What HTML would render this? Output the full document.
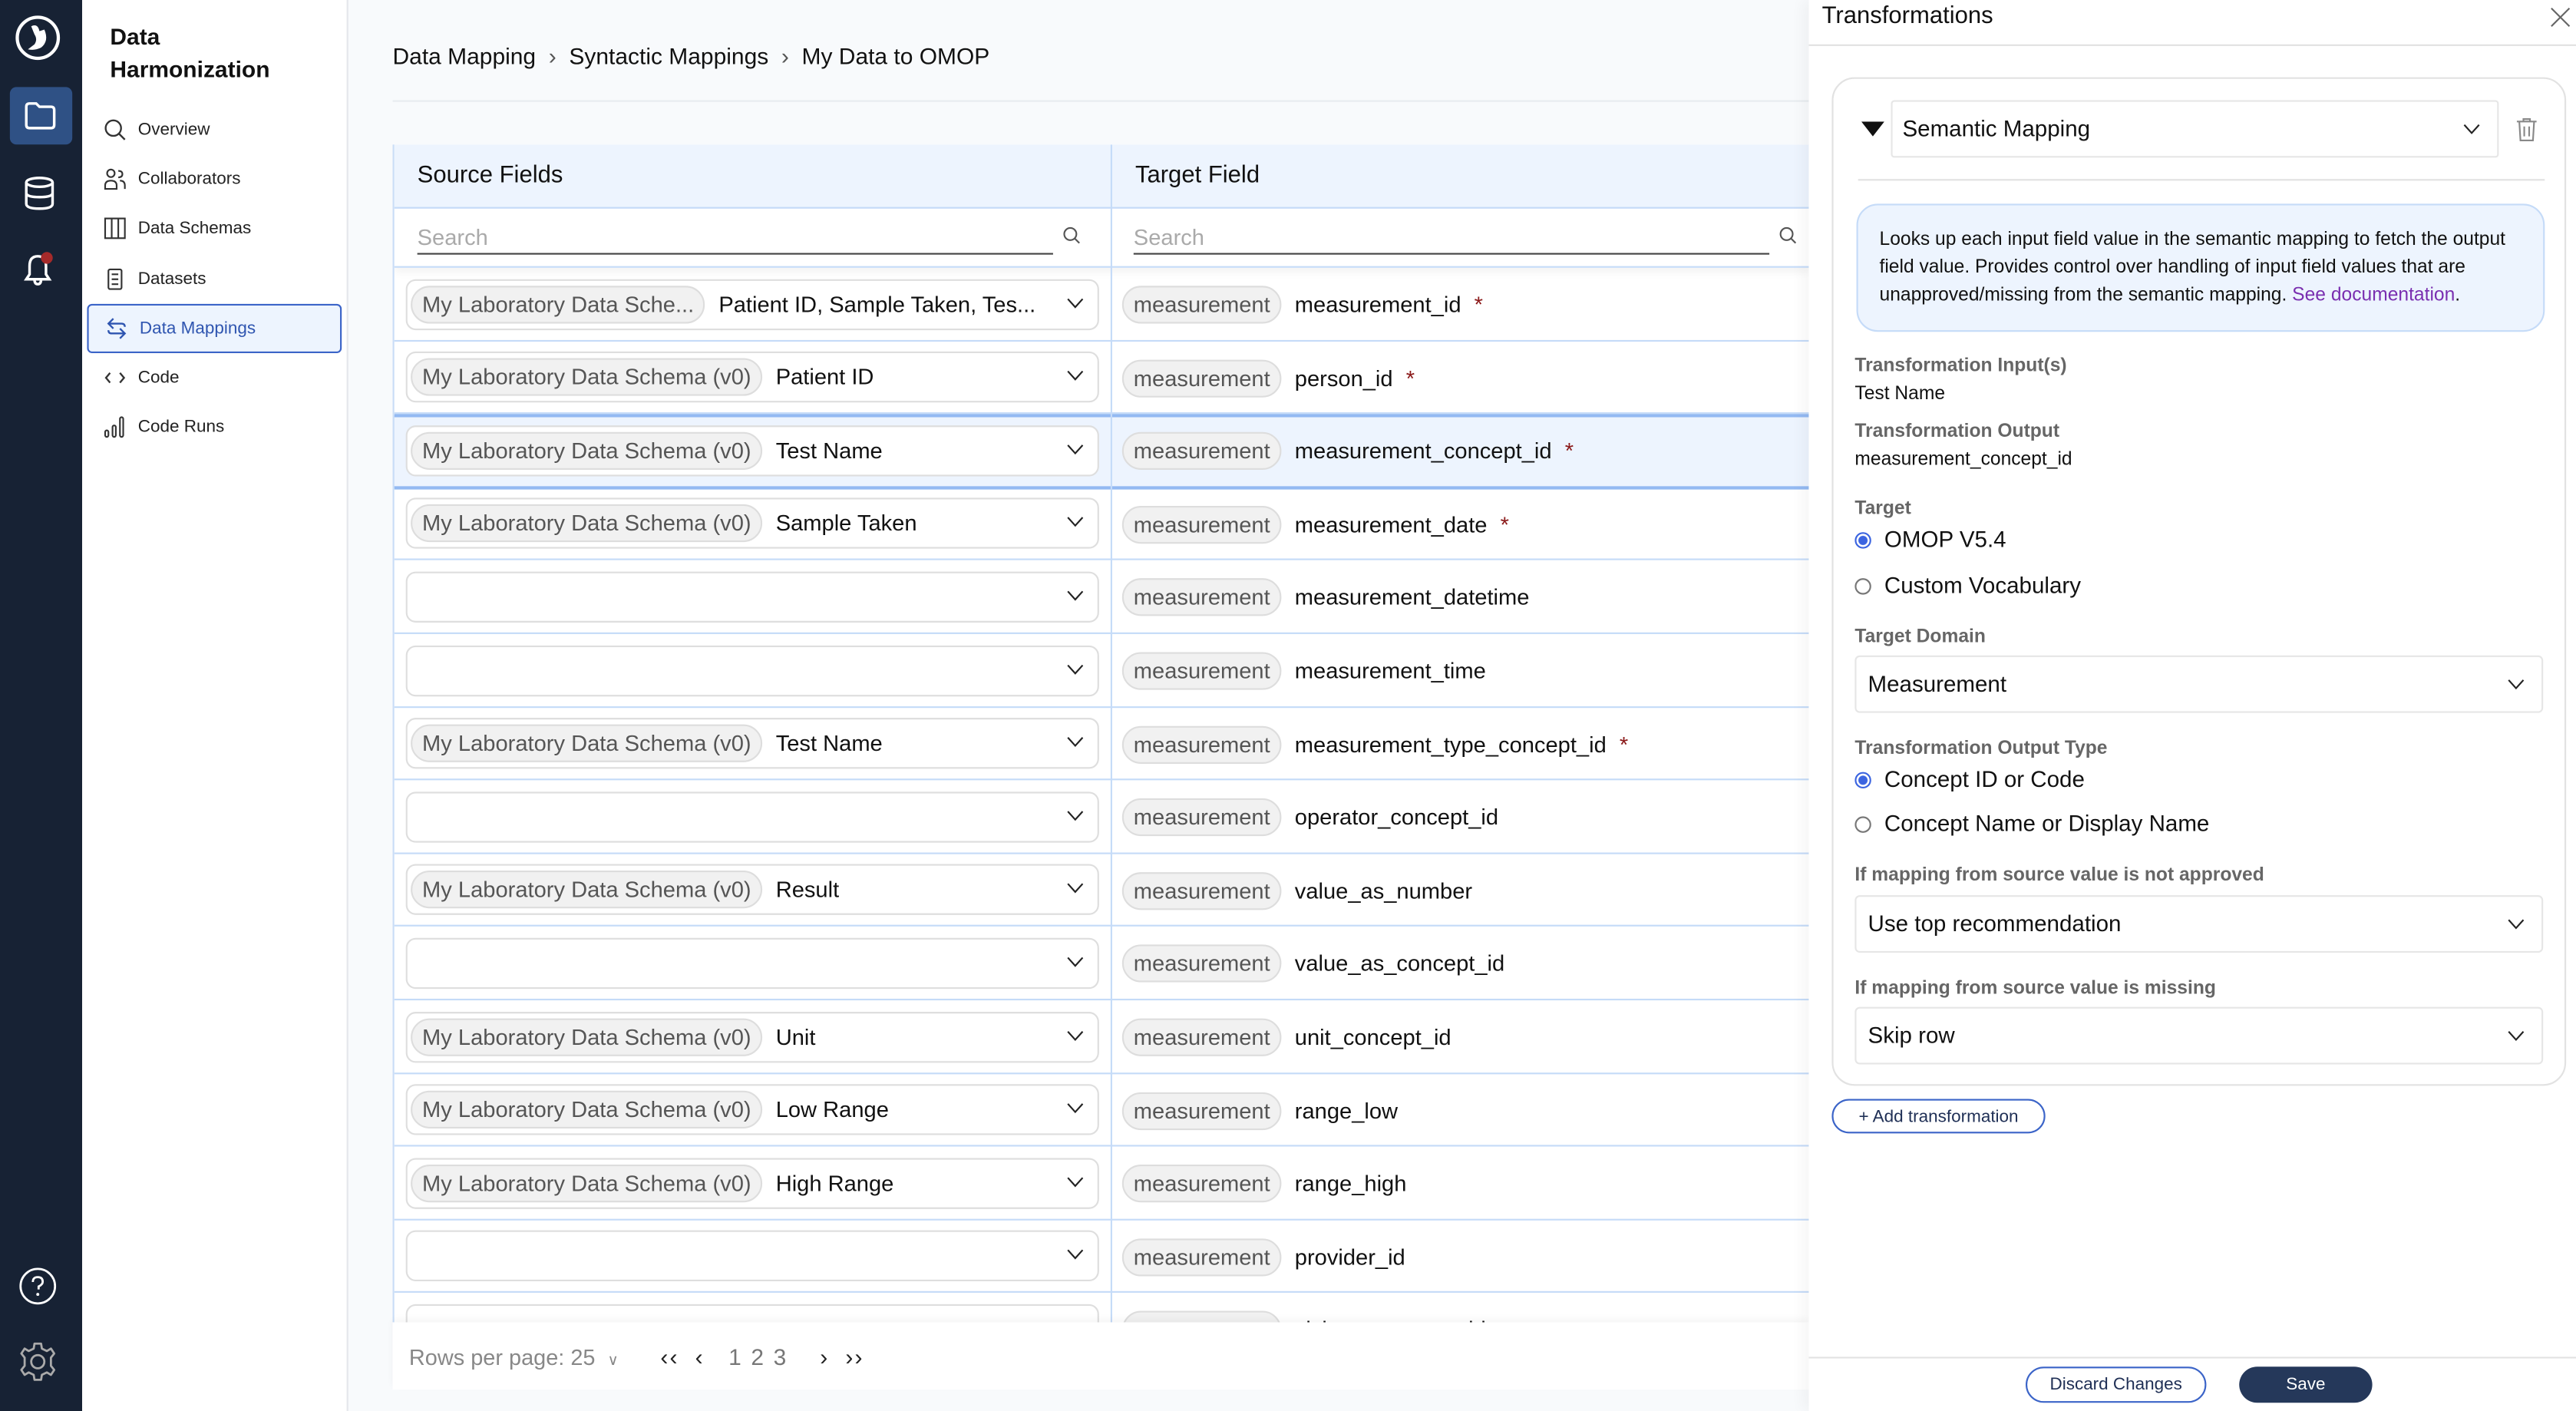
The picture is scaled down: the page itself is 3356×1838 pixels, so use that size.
<!DOCTYPE html>
<html><head><meta charset="utf-8"><style>
*{box-sizing:border-box;margin:0;padding:0}
html,body{width:3356px;height:1838px;overflow:hidden;background:#f8fafc}
#s{position:absolute;left:0;top:0;width:1568px;height:859px;transform:scale(2.1403,2.1397);transform-origin:0 0;font-family:"Liberation Sans",sans-serif;color:#111;background:#f8fafc}
.a{position:absolute}
.rail{left:0;top:0;width:50px;height:859px;background:#172234}
.side{left:50px;top:0;width:162px;height:859px;background:#fff;border-right:1px solid #e5e7eb}
.nav{position:absolute;left:3px;width:155px;height:30px;font-size:10.5px;color:#222;display:flex;align-items:center;padding-left:10px;gap:7px}
.nav svg{width:14px;height:14px}
.tbl{left:239px;top:88px;width:862px;height:717px;background:#fff;overflow:hidden;border-left:1px solid #c9ddf7}
.hdr{position:absolute;top:0;height:39px;background:#edf4fe;border-bottom:1px solid #c5dbf8;font-size:14.5px;display:flex;align-items:center;padding-left:14px}
.row{position:absolute;left:0;width:862px;height:44.6px;border-bottom:1px solid #c5dbf8}
.sel{position:absolute;left:7px;top:6.5px;width:422px;height:31px;border:1px solid #dedede;border-radius:6px;background:#fff;display:flex;align-items:center;padding-left:2px;font-size:13.6px}
.chip{background:#f1f1f1;border:1px solid #ddd;border-radius:13px;height:23px;display:flex;align-items:center;padding:0 6px;color:#555;font-size:13.6px;white-space:nowrap}
.val{margin-left:8px;white-space:nowrap}
.chev{position:absolute;right:8px;top:10px;width:11px;height:8px}
.tgt{position:absolute;left:443px;top:11px;display:flex;align-items:center;font-size:13.6px}
.star{color:#8b1a1a;margin-left:8px}
.vline{position:absolute;left:436px;top:0;width:1px;height:717px;background:#c5dbf8}
.panel{left:1101px;top:0;width:467px;height:859px;background:#fff;box-shadow:-4px 0 8px rgba(0,0,0,.04)}
.lbl{position:absolute;left:28px;font-size:11.5px;font-weight:bold;color:#666}
.txt{position:absolute;left:28px;font-size:11.5px;color:#111}
.radio{position:absolute;left:28px;font-size:13.8px;display:flex;align-items:center;gap:8px}
.rd{width:10px;height:10px;border-radius:50%;border:1px solid #777;background:#fff}
.rd.on{border:1px solid #3b64e0;background:radial-gradient(circle,#3b64e0 0 2.6px,#fff 3px)}
.dd{position:absolute;left:28px;width:419px;height:35px;border:1px solid #e6e6e6;border-radius:3px;font-size:13.8px;display:flex;align-items:center;padding-left:7px}
.dd svg{position:absolute;right:10px;top:13px;width:11px;height:8px}
</style></head><body><div id="s">
<div class="a rail">
<svg class="a" style="left:9px;top:9px" width="28" height="28" viewBox="0 0 28 28"><circle cx="14" cy="14" r="12.5" fill="none" stroke="#fff" stroke-width="2"/><path d="M10 7 Q14 5 15 10 L18 9 Q21 16 16 20 Q12 22 8 21 L12 18 Q14 15 12 12 Z" fill="#fff"/></svg>
<div class="a" style="left:6px;top:53px;width:38px;height:35px;background:#2f5185;border-radius:4px"></div>
<svg class="a" style="left:14px;top:61px" width="21" height="19" viewBox="0 0 21 19"><path d="M2 4 Q2 2 4 2 H8 L10 4 H17 Q19 4 19 6 V15 Q19 17 17 17 H4 Q2 17 2 15 Z" fill="none" stroke="#fff" stroke-width="1.6"/></svg>
<svg class="a" style="left:14px;top:107px" width="20" height="21" viewBox="0 0 20 21"><ellipse cx="10" cy="4" rx="8" ry="2.7" fill="none" stroke="#fff" stroke-width="1.6"/><path d="M2 4 V17 Q2 20 10 20 Q18 20 18 17 V4 M2 10.5 Q2 13 10 13 Q18 13 18 10.5" fill="none" stroke="#fff" stroke-width="1.6"/></svg>
<svg class="a" style="left:11px;top:151px" width="24" height="24" viewBox="0 0 24 24"><path d="M5 19 L7 16 V11 Q7 5 12 5 Q17 5 17 11 V16 L19 19 Z M10 19 Q10 22 12 22 Q14 22 14 19" fill="none" stroke="#fff" stroke-width="1.6"/><circle cx="17.5" cy="6" r="3.6" fill="#a52a2a"/></svg>
<svg class="a" style="left:11px;top:771px" width="24" height="24" viewBox="0 0 24 24"><circle cx="12" cy="12" r="10.5" fill="none" stroke="#fff" stroke-width="1.3"/><path d="M9 9.5 Q9 6.5 12 6.5 Q15 6.5 15 9.3 Q15 11 12.5 12.2 V14" fill="none" stroke="#fff" stroke-width="1.3"/><circle cx="12" cy="17" r="0.9" fill="#fff"/></svg>
<svg class="a" style="left:10px;top:816px" width="26" height="26" viewBox="0 0 26 26"><path d="M11 2 H15 L15.5 5 L18.5 6.5 L21 5 L23 8 L21 10.5 V15.5 L23 18 L21 21 L18.5 19.5 L15.5 21 L15 24 H11 L10.5 21 L7.5 19.5 L5 21 L3 18 L5 15.5 V10.5 L3 8 L5 5 L7.5 6.5 L10.5 5 Z" fill="none" stroke="#aaa" stroke-width="1.3" stroke-linejoin="round"/><circle cx="13" cy="13" r="4" fill="none" stroke="#aaa" stroke-width="1.3"/></svg>
</div>
<div class="a side">
<div class="a" style="left:17px;top:12px;font-size:14px;font-weight:bold;line-height:20px">Data<br>Harmonization</div>
<div class="nav" style="top:64px"><svg viewBox="0 0 14 14"><circle cx="6" cy="6" r="4.7" fill="none" stroke="#333" stroke-width="1.1"/><path d="M9.5 9.5 L13 13" stroke="#333" stroke-width="1.1"/></svg>Overview</div>
<div class="nav" style="top:94px"><svg viewBox="0 0 14 14"><circle cx="4.5" cy="3.5" r="2.3" fill="none" stroke="#333"/><path d="M1 13 V11 Q1 8 4.5 8 Q8 8 8 11 V13 Z M9 2 Q11.5 2 11.5 4 Q11.5 6 9 6 M10 8 Q13 8 13 11 V13" fill="none" stroke="#333"/></svg>Collaborators</div>
<div class="nav" style="top:124px"><svg viewBox="0 0 14 14"><rect x="1" y="1" width="12" height="12" fill="none" stroke="#333"/><path d="M5 1 V13 M9 1 V13" stroke="#333"/></svg>Data Schemas</div>
<div class="nav" style="top:155px"><svg viewBox="0 0 14 14"><rect x="3" y="1" width="8" height="12" rx="1" fill="none" stroke="#333"/><path d="M5 4 H9 M5 7 H9 M5 10 H9" stroke="#333"/></svg>Datasets</div>
<div class="nav" style="top:185px;background:#edf4fe;border:1px solid #3b64c8;border-radius:3px;color:#2f55b0"><svg viewBox="0 0 14 14"><path d="M5 1 L2 4 L5 7 M2 4 H10 Q12 4 12 6 M9 7 L12 10 L9 13 M12 10 H4 Q2 10 2 8" fill="none" stroke="#2f55b0" stroke-width="1.1"/></svg>Data Mappings</div>
<div class="nav" style="top:215px"><svg viewBox="0 0 14 14"><path d="M4 4 L1.5 7 L4 10 M10 4 L12.5 7 L10 10" fill="none" stroke="#333" stroke-width="1.1"/></svg>Code</div>
<div class="nav" style="top:245px"><svg viewBox="0 0 14 14"><rect x="1" y="9" width="2" height="4" rx="1" fill="none" stroke="#333"/><rect x="5.5" y="6" width="2" height="7" rx="1" fill="none" stroke="#333"/><rect x="10" y="1" width="2" height="12" rx="1" fill="none" stroke="#333"/></svg>Code Runs</div>
</div>
<div class="a" style="left:239px;top:26px;font-size:14px">Data Mapping <span style="color:#555">&nbsp;›&nbsp;</span> Syntactic Mappings <span style="color:#555">&nbsp;›&nbsp;</span> My Data to OMOP</div>
<div class="a" style="left:239px;top:61px;width:862px;height:1px;background:#e8ecf0"></div>
<div class="a tbl">
<div class="hdr" style="left:0;width:437px">Source Fields</div>
<div class="hdr" style="left:437px;width:425px">Target Field</div>
<div class="a" style="left:0;top:39px;width:862px;height:36px;border-bottom:1px solid #c5dbf8;box-shadow:0 3px 5px rgba(0,0,0,.05)"></div>
<div class="a" style="left:14px;top:49px;font-size:13.6px;color:#aaa">Search</div>
<div class="a" style="left:14px;top:66px;width:387px;height:1px;background:#444"></div>
<svg class="a" style="left:407px;top:50px" width="11" height="11" viewBox="0 0 11 11"><circle cx="4.5" cy="4.5" r="3.7" fill="none" stroke="#555"/><path d="M7.3 7.3 L10 10" stroke="#555"/></svg>
<div class="a" style="left:450px;top:49px;font-size:13.6px;color:#aaa">Search</div>
<div class="a" style="left:450px;top:66px;width:387px;height:1px;background:#444"></div>
<svg class="a" style="left:843px;top:50px" width="11" height="11" viewBox="0 0 11 11"><circle cx="4.5" cy="4.5" r="3.7" fill="none" stroke="#555"/><path d="M7.3 7.3 L10 10" stroke="#555"/></svg>
<div id="rows"></div>
<div class="vline"></div>
</div>
<div class="a" style="left:239px;top:805px;width:862px;height:41px;background:#fff;box-shadow:0 -2px 4px rgba(0,0,0,.04)"></div>
<div class="a" style="left:249px;top:819px;font-size:13.5px;color:#888">Rows per page: 25 &nbsp;<span style="font-size:9px">∨</span></div>
<div class="a" style="left:402px;top:818px;font-size:14px;color:#222;letter-spacing:1px">‹‹ &nbsp;‹ &nbsp;&nbsp;<span style="color:#777">1 2 3</span>&nbsp;&nbsp;&nbsp; › &nbsp;››</div>
<div class="a panel">
<div class="a" style="left:8px;top:2px;font-size:14.5px">Transformations</div>
<svg class="a" style="left:451px;top:4px" width="13" height="13" viewBox="0 0 13 13"><path d="M1 1 L12 12 M12 1 L1 12" stroke="#666" stroke-width="1"/></svg>
<div class="a" style="left:0;top:27px;width:467px;height:1px;background:#e2e2e2"></div>
<div class="a" style="left:14px;top:47px;width:447px;height:614px;border:1px solid #e2e2e2;border-radius:14px">
<svg class="a" style="left:17px;top:26px" width="14" height="10" viewBox="0 0 14 10"><path d="M0 0 H14 L7 9 Z" fill="#111"/></svg>
<div class="a" style="left:35px;top:13px;width:370px;height:35px;border:1px solid #e6e6e6;border-radius:2px;font-size:13.8px;display:flex;align-items:center;padding-left:6px">Semantic Mapping<svg class="a" style="right:10px;top:13px" width="11" height="8" viewBox="0 0 11 8"><path d="M1 1 L5.5 6 L10 1" fill="none" stroke="#222"/></svg></div>
<svg class="a" style="left:415px;top:23px" width="14" height="16" viewBox="0 0 14 16"><path d="M1 3 H13 M5 3 V1.5 H9 V3 M2.5 3 L3.2 14.5 H10.8 L11.5 3 M5.5 6 V12 M8.5 6 V12" fill="none" stroke="#888" stroke-width="1"/></svg>
<div class="a" style="left:15px;top:61px;width:418px;height:1px;background:#e2e2e2"></div>
<div class="a" style="left:14px;top:76px;width:419px;height:78px;background:#edf4fe;border:1px solid #c5dbf8;border-radius:13px;padding:13px 13px;font-size:11.5px;line-height:17px">Looks up each input field value in the semantic mapping to fetch the output field value. Provides control over handling of input field values that are unapproved/missing from the semantic mapping. <span style="color:#7a2fb0">See documentation</span>.</div>
</div>
<div class="lbl" style="top:217px">Transformation Input(s)</div>
<div class="txt" style="top:234px">Test Name</div>
<div class="lbl" style="top:257px">Transformation Output</div>
<div class="txt" style="top:274px">measurement_concept_id</div>
<div class="lbl" style="top:304px">Target</div>
<div class="radio" style="top:321px"><span class="rd on"></span>OMOP V5.4</div>
<div class="radio" style="top:349px"><span class="rd"></span>Custom Vocabulary</div>
<div class="lbl" style="top:382px">Target Domain</div>
<div class="dd" style="top:399px">Measurement<svg viewBox="0 0 11 8"><path d="M1 1 L5.5 6 L10 1" fill="none" stroke="#222"/></svg></div>
<div class="lbl" style="top:450px">Transformation Output Type</div>
<div class="radio" style="top:467px"><span class="rd on"></span>Concept ID or Code</div>
<div class="radio" style="top:494px"><span class="rd"></span>Concept Name or Display Name</div>
<div class="lbl" style="top:527px">If mapping from source value is not approved</div>
<div class="dd" style="top:545px">Use top recommendation<svg viewBox="0 0 11 8"><path d="M1 1 L5.5 6 L10 1" fill="none" stroke="#222"/></svg></div>
<div class="lbl" style="top:596px">If mapping from source value is missing</div>
<div class="dd" style="top:613px">Skip row<svg viewBox="0 0 11 8"><path d="M1 1 L5.5 6 L10 1" fill="none" stroke="#222"/></svg></div>
<div class="a" style="left:14px;top:669px;width:130px;height:21px;border:1px solid #3b64c8;border-radius:11px;font-size:10.5px;color:#1f2f55;display:flex;align-items:center;justify-content:center">+ Add transformation</div>
<div class="a" style="left:0;top:826px;width:467px;height:1px;background:#e2e2e2"></div>
<div class="a" style="left:132px;top:832px;width:110px;height:22px;border:1px solid #3b64c8;border-radius:11px;font-size:10.5px;color:#1f2f55;display:flex;align-items:center;justify-content:center">Discard Changes</div>
<div class="a" style="left:262px;top:832px;width:81px;height:22px;background:#25385a;border-radius:11px;font-size:10.5px;color:#fff;display:flex;align-items:center;justify-content:center">Save</div>
</div>
</div>
<script>
var d=[["My Laboratory Data Sche...","Patient ID, Sample Taken, Tes...","measurement_id",1],
["S","Patient ID","person_id",1],["S","Test Name","measurement_concept_id",1],["S","Sample Taken","measurement_date",1],
["","","measurement_datetime",0],["","","measurement_time",0],["S","Test Name","measurement_type_concept_id",1],
["","","operator_concept_id",0],["S","Result","value_as_number",0],["","","value_as_concept_id",0],
["S","Unit","unit_concept_id",0],["S","Low Range","range_low",0],["S","High Range","range_high",0],
["","","provider_id",0],["","","visit_occurrence_id",0]];
var h="";
d.forEach(function(r,i){var t=75+i*44.6;var hl=i==2;
h+='<div class="row" style="top:'+t+'px;'+(hl?'background:#edf4fe;box-shadow:inset 0 2px 0 #93b9f2, 0 1px 0 #93b9f2;border-bottom:1px solid #93b9f2;':'')+'">';
h+='<div class="sel">'+(r[0]?'<span class="chip">'+(r[0]=="S"?"My Laboratory Data Schema (v0)":r[0])+'</span><span class="val">'+r[1]+'</span>':'')+'<svg class="chev" viewBox="0 0 11 8"><path d="M1 1 L5.5 6 L10 1" fill="none" stroke="#222"/></svg></div>';
h+='<div class="tgt"><span class="chip">measurement</span><span class="val">'+r[2]+'</span>'+(r[3]?'<span class="star">*</span>':'')+'</div></div>';});
document.getElementById("rows").innerHTML=h;
</script>
</body></html>
